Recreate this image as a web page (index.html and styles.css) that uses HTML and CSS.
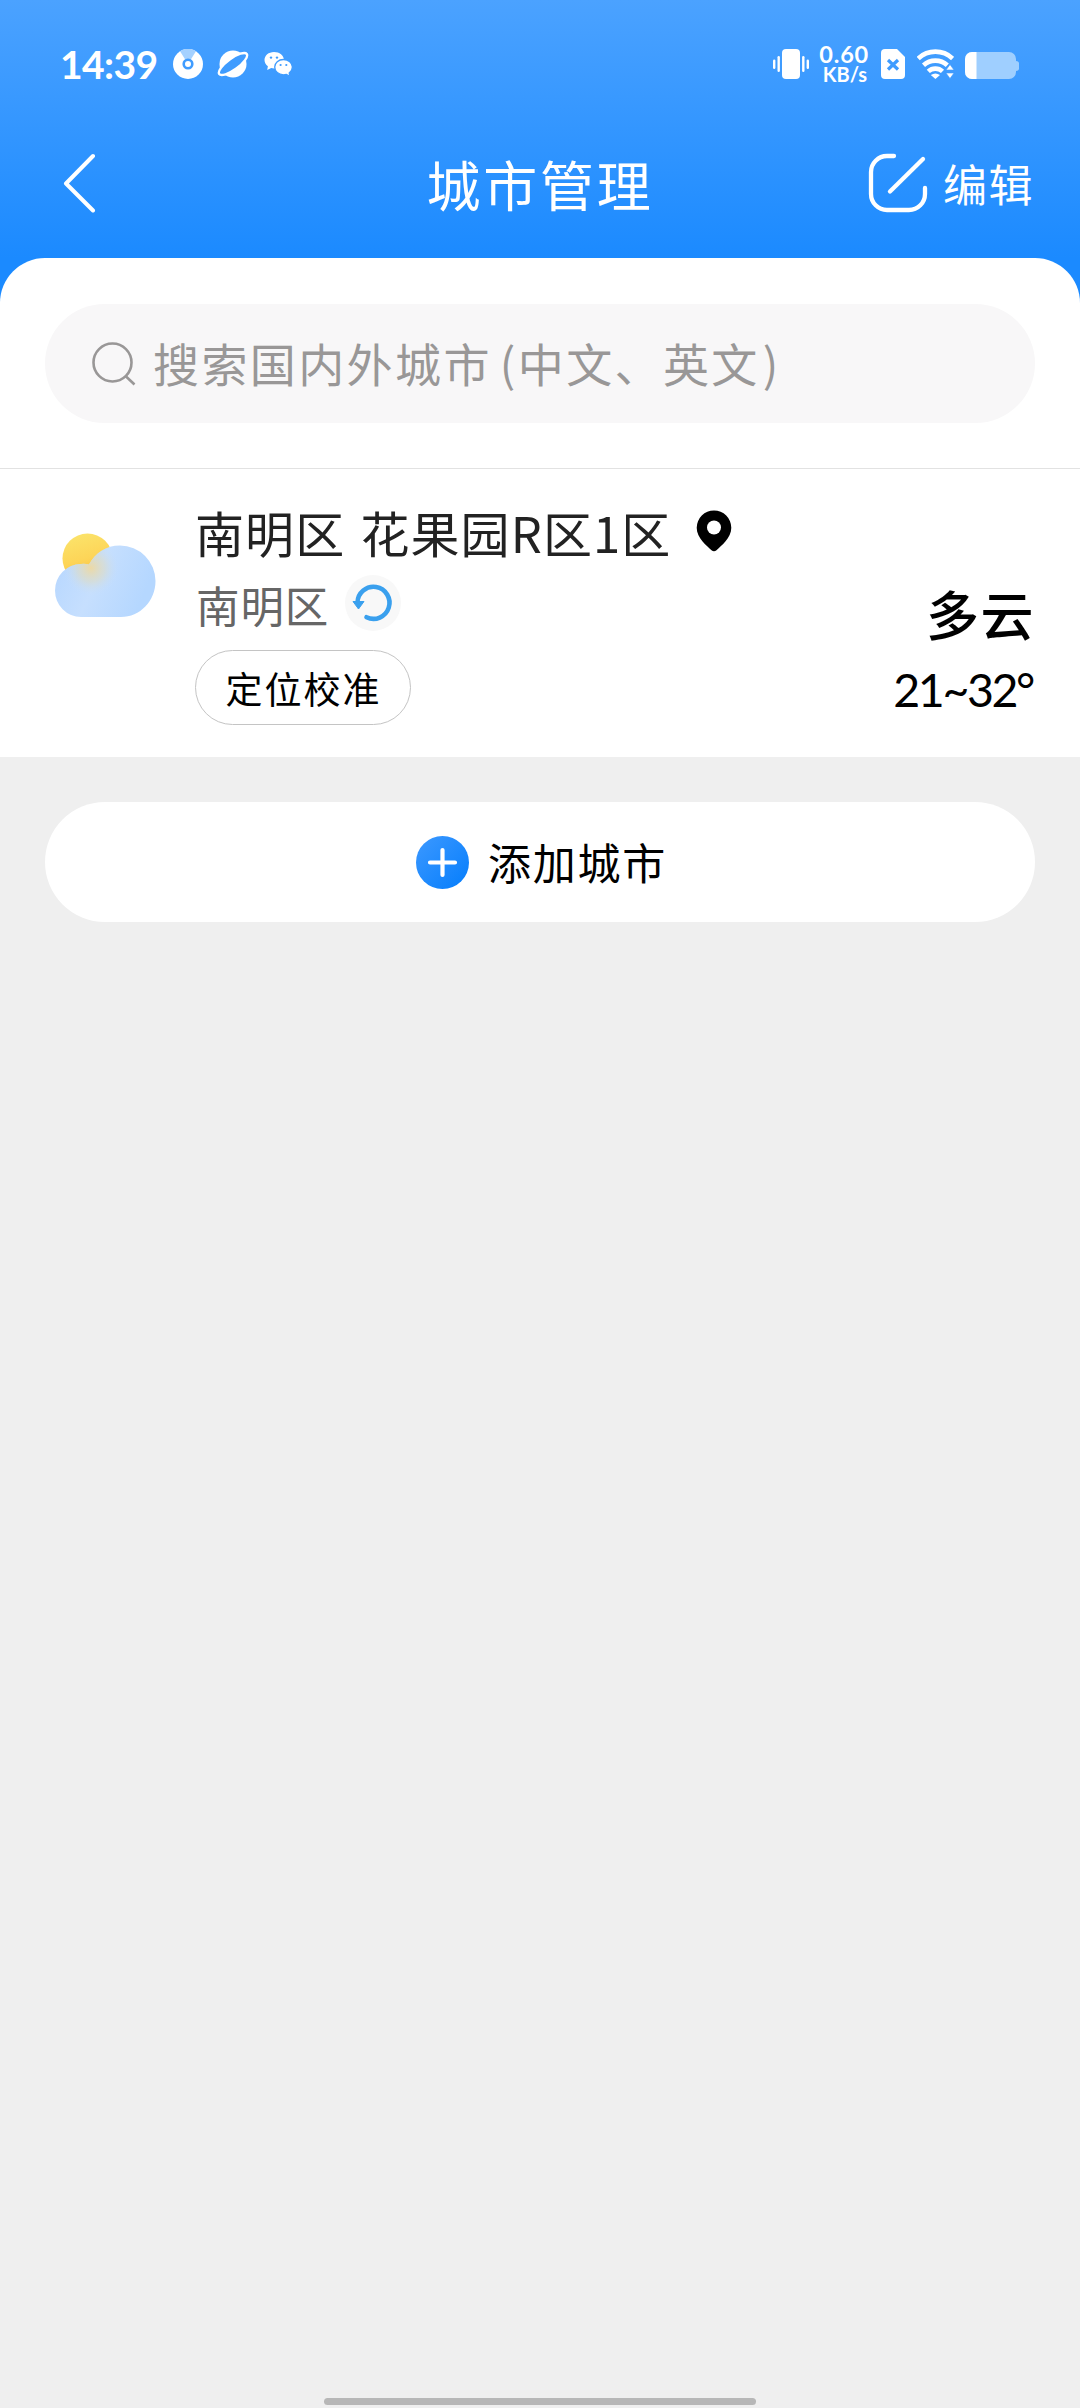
FILE: index.html
```html
<!DOCTYPE html>
<html lang="zh-CN">
<head>
<meta charset="utf-8">
<title>城市管理</title>
<link rel="stylesheet" href="styles.css">
</head>
<body>
<div class="app">
  <div class="status">
    <div class="status-left">
      <span class="time">14:39</span>
      <svg class="i-disc" width="30" height="30" viewBox="0 0 30 30"><circle cx="15" cy="15" r="15" fill="#fff"/><path d="M15 15 7 2.300A15 15 0 0 1 23 2.300Z" fill="#a5d1ff"/><circle cx="15" cy="15" r="4.300" fill="#fff" stroke="#3f9cff" stroke-width="2.600"/></svg>
      <svg class="i-planet" width="32" height="30" viewBox="0 0 32 30"><circle cx="16" cy="15" r="13.500" fill="#fff"/><ellipse cx="16" cy="15" rx="17" ry="5.600" transform="rotate(-36 16 15)" fill="#3f9cff" stroke="#fff" stroke-width="2.400"/></svg>
      <svg class="i-chat" width="29" height="26" viewBox="0 0 29 26"><path d="M10 1C4.500 1 .5 4.600.5 9c0 2.600 1.300 4.700 3.400 6.200L3.200 19l4-2c1 .3 1.900.4 3 .4C15.800 17.400 20 14 20 9.200 20 4.500 15.500 1 10 1Z" fill="#fff"/><path d="M19.500 8.500c-5 0-8.800 3.300-8.800 7.600s3.800 7.700 8.800 7.700c1 0 2-.1 2.900-.4l3.600 2-.8-3.400c1.900-1.400 3.200-3.400 3.200-5.900 0-4.300-4-7.600-8.900-7.600Z" fill="#fff" stroke="#3f9cff" stroke-width="1.300"/><g fill="#3f9cff"><circle cx="7" cy="6.600" r="1.200"/><circle cx="13" cy="6.600" r="1.200"/><circle cx="16.600" cy="14" r="1.100"/><circle cx="22.300" cy="14" r="1.100"/></g></svg>
    </div>
    <div class="status-right">
      <svg width="36" height="30" viewBox="0 0 36 30" fill="#fff"><rect x="9" width="18" height="30" rx="4"/><rect x="4.500" y="7" width="2.400" height="16" rx="1.200"/><rect y="10.500" width="2.400" height="9.500" rx="1.200"/><rect x="29.100" y="7" width="2.400" height="16" rx="1.200"/><rect x="33.600" y="10.500" width="2.400" height="9.500" rx="1.200"/></svg>
      <div class="speed"><span class="rate">0.60</span><span class="unit">KB/s</span></div>
      <svg class="i-sim" width="24" height="30" viewBox="0 0 24 30"><path d="M4 0h12l8 8v18a4 4 0 0 1-4 4H4a4 4 0 0 1-4-4V4a4 4 0 0 1 4-4Z" fill="#fff"/><path d="m7 11 10 9.500m0-9.500-10 9.500" stroke="#3f9cff" stroke-width="3.200"/></svg>
      <svg class="i-wifi" width="37" height="30" viewBox="0 0 37 30"><g fill="none" stroke="#fff" stroke-width="4.600"><path d="M1.200 9.500a25 25 0 0 1 34.400 0"/><path d="M6.500 16.300a17.500 17.500 0 0 1 23.800 0"/><path d="M11.300 22.400a10.500 10.500 0 0 1 14.200 0"/></g><path d="M18.400 30 13.800 26q4.600-3 9.200 0Z" fill="#fff"/><path d="m33 15.500 4 5.500h-8Zm0 14 4-5.500h-8Z" fill="#fff" stroke="#3f9cff" stroke-width=".6"/></svg>
      <svg class="i-batt" width="54" height="27" viewBox="0 0 54 27"><path d="M7 0h37a7 7 0 0 1 7 7v2c2 0 3 1 3 2.500v5c0 1.500-1 2.500-3 2.500v1a7 7 0 0 1-7 7H7a7 7 0 0 1-7-7V7a7 7 0 0 1 7-7Z" fill="#9fcfff"/><path d="M11.500 0H7a7 7 0 0 0-7 7v13a7 7 0 0 0 7 7h4.500Z" fill="#fff"/></svg>
    </div>
  </div>
  <div class="nav">
    <svg width="34" height="60" viewBox="0 0 34 60"><path d="M31 3 4 30.500 31 57.500" fill="none" stroke="#fff" stroke-width="4" stroke-linecap="round" stroke-linejoin="round"/></svg>
    <h1 class="title">城市管理</h1>
    <div class="edit">
      <svg width="60" height="60" viewBox="0 0 60 60" fill="none" stroke="#fff" stroke-width="4.300" stroke-linecap="round"><path d="M26 3H19A16 16 0 0 0 3 19V41A16 16 0 0 0 19 57H41A16 16 0 0 0 57 41V35"/><path d="M22 38.500 55 6"/></svg>
      <span>编辑</span>
    </div>
  </div>

  <main class="sheet">
    <div class="search">
      <svg width="44" height="44" viewBox="0 0 44 44" fill="none" stroke="#999797" stroke-width="2.600"><circle cx="20.500" cy="20.500" r="19"/><path d="m33.500 34 9 8.500"/></svg>
      <span class="hint">搜索国内外城市<span class="open">(</span>中文、英文<span class="close">)</span></span>
    </div>
    <div class="city">
      <svg class="weather" width="102" height="86" viewBox="0 0 102 86">
        <defs>
          <linearGradient id="sun" x1=".3" y1="0" x2=".6" y2="1"><stop offset="0" stop-color="#fbe36a"/><stop offset=".5" stop-color="#fdd558"/><stop offset="1" stop-color="#f8b83c"/></linearGradient>
          <linearGradient id="cloud" x1="0" y1="0" x2="1" y2=".3"><stop offset="0" stop-color="#b5d6ff"/><stop offset=".5" stop-color="#c6dffe"/><stop offset="1" stop-color="#b5d7ff"/></linearGradient>
          <radialGradient id="glow" gradientUnits="userSpaceOnUse" cx="36" cy="35" r="28"><stop offset="0" stop-color="#f1d99c" stop-opacity=".9"/><stop offset=".5" stop-color="#dcdcc8" stop-opacity=".6"/><stop offset="1" stop-color="#c6dffe" stop-opacity="0"/></radialGradient>
          <path id="shape" d="M26 31Q30 30.500 34 31.500C40 20 51 12.500 65 12.500A35.500 35.500 0 0 1 100.500 48C100.500 68 85 84 66 84H26A26 26.500 0 0 1 26 31Z"/>
        </defs>
        <circle cx="32.500" cy="25.500" r="25" fill="url(#sun)"/>
        <use href="#shape" fill="url(#cloud)"/>
        <use href="#shape" fill="url(#glow)"/>
      </svg>
      <div class="place">
        <div class="name"><span>南明区 花果园R区1区</span>
          <svg width="36" height="42" viewBox="0 0 36 42"><path d="M18 0.500A17.300 17.300 0 0 0 .7 17.800C.7 28 11 36 15.500 40.200Q18 42.200 20.500 40.200C25 36 35.300 28 35.300 17.800A17.300 17.300 0 0 0 18 .5Z"/><circle cx="18" cy="17.500" r="7" fill="#fff"/></svg>
        </div>
        <div class="district"><span>南明区</span>
          <svg width="56" height="56" viewBox="0 0 56 56"><circle cx="28" cy="28" r="28" fill="#f8f8f8"/><path d="M12 28A16 16 0 1 1 21 42.700" fill="none" stroke="#3aa0ee" stroke-width="4.600" stroke-linecap="round" transform="translate(.5 -.5)"/><path d="M8 26.500h11L13.500 34Z" fill="#3aa0ee" stroke="#3aa0ee" stroke-linejoin="round"/></svg>
        </div>
        <button class="calibrate">定位校准</button>
      </div>
      <div class="forecast">
        <div class="sky">多云</div>
        <div class="temp">21~32°</div>
      </div>
    </div>
  </main>

  <div class="add">
    <svg width="53" height="53" viewBox="0 0 53 53"><defs><linearGradient id="plus" x1=".1" y1=".1" x2=".9" y2=".9"><stop offset="0" stop-color="#3796ff"/><stop offset="1" stop-color="#0a80fc"/></linearGradient></defs><circle cx="26.500" cy="26.500" r="26.500" fill="url(#plus)"/><path d="M26.500 14v25M14 26.500h25" stroke="#fff" stroke-width="4.200" stroke-linecap="round"/></svg>
    <span>添加城市</span>
  </div>
  <div class="home-bar"></div>
</div>
</body>
</html>
```
FILE: styles.css
```css
* { box-sizing: border-box; }

body {
  margin: 0;
  background: #efefef;
  font-family: "Noto Sans CJK SC", sans-serif;
  color: #000;
}

svg { display: block; flex: none; }

.app {
  display: flex;
  flex-direction: column;
  width: 1080px;
  height: 2408px;
  background: linear-gradient(#4ba2ff 0, #1b8aff 258px, #1b8aff 100%) 0 0 / 100% 320px no-repeat;
}

.status {
  display: flex;
  justify-content: space-between;
  align-items: center;
  height: 128px;
  padding: 0 61px 0 60px;
  color: #fff;
  font-family: Lato, sans-serif;
  font-weight: 700;
}

.status-left, .status-right { display: flex; align-items: center; }

.time { width: 98px; font-size: 39px; line-height: 48px; letter-spacing: -0.6px; white-space: nowrap; }
.i-disc { margin-left: 15px; }
.i-planet { margin-left: 14px; }
.i-chat { margin-left: 15px; }

.speed {
  display: flex;
  flex-direction: column;
  align-items: flex-end;
  width: 51px;
  margin: 0 12px 0 9px;
  white-space: nowrap;
}
.rate { font-size: 23.5px; line-height: 19px; letter-spacing: 0.8px; }
.unit { margin-right: 2px; font-size: 20px; line-height: 20px; }
.i-wifi { margin-left: 12px; }
.i-batt { margin: 2px 0 0 11px; }

.nav {
  display: grid;
  grid-template-columns: 1fr auto 1fr;
  align-items: center;
  height: 110px;
  margin-bottom: 20px;
  padding: 0 46px 0 62px;
  color: #fff;
}

.title {
  margin: 1px 0 0 -16px;
  font-size: 54px;
  font-weight: 400;
  line-height: 60px;
  letter-spacing: 2.8px;
}

.edit {
  display: flex;
  justify-content: flex-end;
  align-items: center;
  gap: 15px;
  font-size: 44px;
  line-height: 50px;
  letter-spacing: 1.5px;
}

.sheet {
  height: 499px;
  padding-top: 46px;
  border-radius: 45px 45px 0 0;
  background: #fff;
}

.search {
  display: flex;
  align-items: center;
  gap: 17px;
  height: 119px;
  margin: 0 45px 45px;
  padding-left: 47px;
  border-radius: 60px;
  background: #f8f7f8;
  color: #999797;
}

.hint { margin-top: -4px; font-size: 46px; line-height: 56px; letter-spacing: 2.4px; white-space: nowrap; }
.open { margin-left: 8px; }
.close { margin-left: 3px; }

.city {
  display: flex;
  height: 289px;
  padding: 0 45px 0 55px;
  border-top: 1px solid #e2e2e2;
}

.weather { margin-top: 64px; }

.place {
  display: flex;
  flex-direction: column;
  align-items: flex-start;
  margin-left: 38px;
  padding-top: 31px;
}

.name, .district { display: flex; align-items: center; white-space: nowrap; }
.name { gap: 25px; height: 62px; color: #222; font-size: 49px; letter-spacing: 1.1px; word-spacing: 3px; }
.name span { margin-top: 1px; }
.district { gap: 16px; height: 56px; margin: 13px 0 19px 1px; color: #666; font-size: 43.5px; letter-spacing: 0.9px; }
.district span { margin-top: 2px; }

.calibrate {
  width: 216px;
  height: 75px;
  padding: 2px 0 0 1px;
  border: 1px solid #c4c4c4;
  border-radius: 38px;
  background: #fff;
  color: #000;
  font: 37px/1 "Noto Sans CJK SC", sans-serif;
  letter-spacing: 2px;
}

.forecast { margin-left: auto; padding-top: 114px; text-align: right; white-space: nowrap; }
.sky { font-size: 53px; font-weight: 500; line-height: 60px; letter-spacing: 1.5px; }
.temp { margin: 16px 2px 0 0; font-family: Lato, sans-serif; font-size: 46.5px; line-height: 60px; letter-spacing: -2.4px; }

.add {
  display: flex;
  justify-content: center;
  align-items: center;
  gap: 19px;
  height: 120px;
  margin: 45px 45px 0;
  padding-left: 3px;
  border-radius: 60px;
  background: #fff;
  font-size: 43px;
  line-height: 50px;
  letter-spacing: 1.8px;
}
.add span { margin-top: -2px; }

.home-bar {
  width: 432px;
  height: 7px;
  margin: auto auto 3px;
  border-radius: 4px;
  background: #b7b7b7;
}
```
